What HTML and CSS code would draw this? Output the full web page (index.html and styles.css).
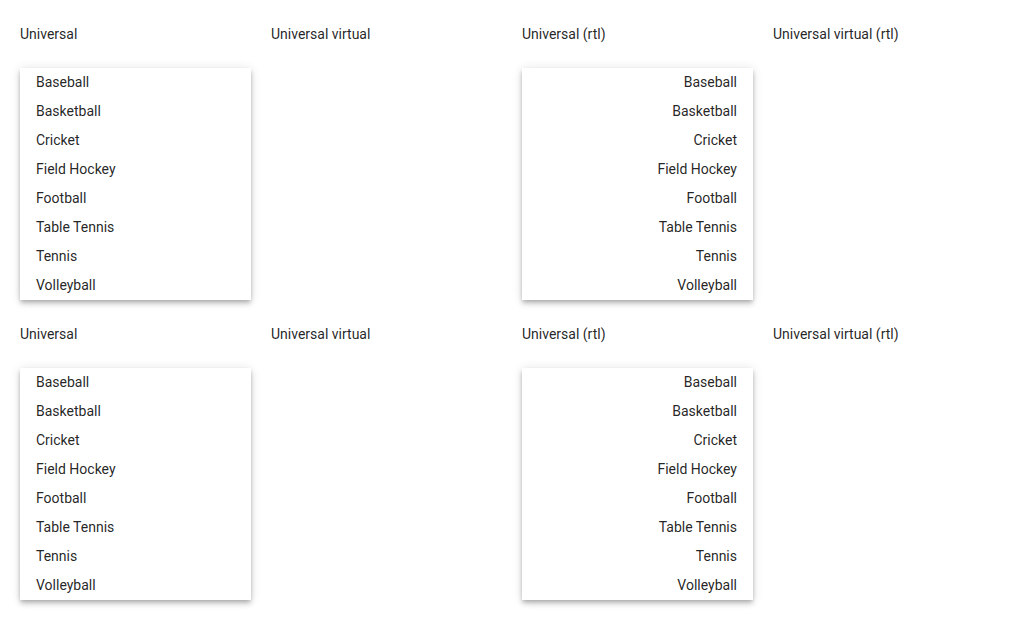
FILE: index.html
```html
<!DOCTYPE html>
<html lang="en">
<head>
    <meta charset="UTF-8">
    <title>Menu lists</title>
    <link rel="stylesheet" href="styles.css">
</head>
<body>
    <div class="grid">
        <section class="cell">
            <p class="label">Universal</p>
            <ul class="menu">
                <li>Baseball</li><li>Basketball</li><li>Cricket</li><li>Field Hockey</li>
                <li>Football</li><li>Table Tennis</li><li>Tennis</li><li>Volleyball</li>
            </ul>
        </section>
        <section class="cell">
            <p class="label">Universal virtual</p>
        </section>
        <section class="cell">
            <p class="label">Universal (rtl)</p>
            <ul class="menu rtl">
                <li>Baseball</li><li>Basketball</li><li>Cricket</li><li>Field Hockey</li>
                <li>Football</li><li>Table Tennis</li><li>Tennis</li><li>Volleyball</li>
            </ul>
        </section>
        <section class="cell">
            <p class="label">Universal virtual (rtl)</p>
        </section>

        <section class="cell">
            <p class="label">Universal</p>
            <ul class="menu">
                <li>Baseball</li><li>Basketball</li><li>Cricket</li><li>Field Hockey</li>
                <li>Football</li><li>Table Tennis</li><li>Tennis</li><li>Volleyball</li>
            </ul>
        </section>
        <section class="cell">
            <p class="label">Universal virtual</p>
        </section>
        <section class="cell">
            <p class="label">Universal (rtl)</p>
            <ul class="menu rtl">
                <li>Baseball</li><li>Basketball</li><li>Cricket</li><li>Field Hockey</li>
                <li>Football</li><li>Table Tennis</li><li>Tennis</li><li>Volleyball</li>
            </ul>
        </section>
        <section class="cell">
            <p class="label">Universal virtual (rtl)</p>
        </section>
    </div>
</body>
</html>
```

FILE: styles.css
```css
body {
    margin: 0;
    padding: 20px;
    font-family: Roboto, 'Liberation Sans', sans-serif;
    font-size: 14px;
    color: rgba(0, 0, 0, 0.87);
    background-color: white;
}
.grid {
    display: grid;
    grid-template-columns: repeat(4, 231px);
    column-gap: 20px;
    row-gap: 20px;
}
.cell {
    display: flex;
    flex-direction: column;
    gap: 20px;
}
.label {
    margin: 0;
    line-height: 28px;
}
.menu {
    list-style: none;
    margin: 0;
    padding: 0;
    background-color: white;
    box-shadow: 0 2px 4px -1px rgba(0, 0, 0, 0.2),
                0 4px 5px 0 rgba(0, 0, 0, 0.14),
                0 1px 10px 0 rgba(0, 0, 0, 0.12);
}
.menu li {
    padding: 4px 16px;
    line-height: 21px;
}
.menu.rtl {
    text-align: right;
}
```
